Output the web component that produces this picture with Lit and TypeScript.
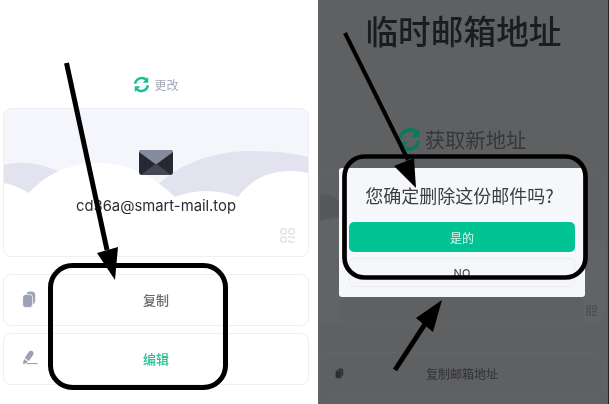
import { LitElement, html, css, svg } from "lit";
import { customElement } from "lit/decorators.js";

const refreshIcon = svg`<path d="M3 11 A9.5 9.5 0 0 1 19 5.5" fill="none" stroke="#0fc492" stroke-width="3.4"/><path d="M21.5 1.5 V9.5 H13.5 Z" fill="#0fc492"/><path d="M21 13 A9.5 9.5 0 0 1 5 18.5" fill="none" stroke="#0fc492" stroke-width="3.4"/><path d="M2.5 22.5 V14.5 H10.5 Z" fill="#0fc492"/>`;
const copyIcon = svg`<rect x="4.4" y="0.6" width="8.8" height="12.6" rx="3.6" fill="currentColor"/><rect x="0.6" y="3.4" width="10" height="13.2" rx="3.2" fill="currentColor" stroke="var(--gap, #fff)" stroke-width="0.8"/>`;
const penIcon = svg`<path d="M7 1.6 C8 .4 9.4 .4 10.6 1.3 C11.8 2.2 12 3.6 11.2 4.8 L7 11 L2.7 8 Z" fill="currentColor"/><path d="M2 9 L6 11.8 L3.8 13.6 L.8 13.9 Z" fill="currentColor"/><rect x="5" y="13" width="10.6" height="1.1" fill="currentColor"/>`;
const qrIcon = svg`<g fill="none" stroke="currentColor" stroke-width="1.5"><rect x="1" y="1" width="5" height="5" rx="1.2"/><rect x="9" y="1" width="5" height="5" rx="1.2"/><rect x="1" y="9" width="5" height="5" rx="1.2"/><path d="M9 10 V9 H14 V11 M14 14 H9 V12"/></g>`;

@customElement("mail-card")
class MailCard extends LitElement {
  static styles = css`
    :host { display: block; height: 149px; box-sizing: border-box; position: relative; overflow: hidden;
      background: #f5f6fb; border: 1px solid #eeeff6; border-radius: 8px; }
    .clouds { position: absolute; inset: 0; width: 100%; height: 100%; }
    .body { position: relative; height: 100%; display: flex; flex-direction: column; align-items: center; padding-top: 41px; box-sizing: border-box; }
    .env { width: 34px; height: 25px; display: block; }
    .addr { margin-top: 21px; font: 14.8px/20px "Inter", "Liberation Sans", sans-serif; color: #2a2c34; }
    .qr { position: absolute; right: 13px; bottom: 13px; width: 15px; height: 15px; color: #e2e3ea; }
  `;
  render() {
    return html`
      <svg class="clouds" viewBox="0 0 304 147" preserveAspectRatio="none">
        <path d="M0 56 C15 52 35 52 62 66 L25 90 L0 80 Z" fill="#e2e3ee"/>
        <path d="M150 80 C175 52 215 42 246 42 C270 42 290 44 304 48 V70 L234 92 L171 92 Z" fill="#e2e3ee"/>
        <path d="M0 74 C10 76 18 80 25 84 C45 62 70 54 96 54 C125 54 150 68 171 88 C190 80 215 80 234 88 C250 66 275 58 304 64 V147 H0 Z" fill="#fff"/>
      </svg>
      <div class="body">
        <svg class="env" viewBox="0 0 34 26" preserveAspectRatio="none">
          <rect width="34" height="26" rx="3" fill="#262933"/>
          <path d="M0 2 Q0 0 3 0 H31 Q34 0 34 2 L17 15 Z" fill="#878b9e"/>
          <path d="M2 26 L17 14 L32 26 Z" fill="#454753"/>
        </svg>
        <div class="addr">cd36a@smart-mail.top</div>
      </div>
      <svg class="qr" viewBox="0 0 15 15">${qrIcon}</svg>`;
  }
}

@customElement("app-root")
export class AppRoot extends LitElement {
  static styles = css`
    :host { display: block; position: relative; width: 609px; height: 404px; overflow: hidden; background: #fff;
      font-family: "Noto Sans CJK SC", "Liberation Sans", sans-serif; }
    .screens { display: grid; grid-template-columns: 318px 290px 1px; height: 404px; background: #fff; filter: blur(.35px); }
    .left { padding: 73px 9px 0 3px; box-sizing: border-box; display: flex; flex-direction: column; }
    .change { height: 22px; display: flex; justify-content: center; align-items: center; gap: 4px; margin-bottom: 13px; font-size: 12px; color: #a4a7b5; }
    .change svg { width: 17px; height: 17px; }
    .rows { margin-top: 17px; display: flex; flex-direction: column; gap: 7px; }
    .row { height: 52px; box-sizing: border-box; border: 1px solid #eeeff6; border-radius: 8px; background: #fff; position: relative; padding-bottom: 2px;
      display: flex; align-items: center; justify-content: center; font-size: 13px; font-weight: 500; color: #6a6b70; }
    .row .ic { position: absolute; left: 18px; top: 16px; width: 16px; height: 17px; color: #9da1b6; }
    .row.edit { color: #27c195; }
    .right { position: relative; background: #5f6062; overflow: hidden; padding: 0 3px 0 0; box-sizing: border-box; display: flex; flex-direction: column; border-left: 1px solid #666; }
    .title { margin: 10px 0 0; text-align: center; font-size: 32.7px; line-height: 40px; font-weight: 500; color: #1b1c20; padding-left: 3px; white-space: nowrap; }
    .get { margin-top: 76px; height: 28px; padding: 0 1px 2px 0; box-sizing: border-box; display: flex; justify-content: center; align-items: center; gap: 3px; font-size: 20.3px; color: #36373b; }
    .get svg { width: 25px; height: 25px; filter: brightness(.62); }
    .bgcard { margin-top: 16px; height: 154px; box-sizing: border-box; border: 1px solid #636466; border-radius: 10px; position: relative; overflow: hidden; background: #5f6062; }
    .bands { position: absolute; inset: 0; width: 100%; height: 100%; }
    .bgcard .qr { position: absolute; right: 7px; bottom: 7px; width: 11px; height: 11px; color: #4a4b4e; }
    .bgrow { --gap: #5f6062; margin-top: 28px; height: 45px; box-sizing: border-box; padding-bottom: 3px; border: 1px solid #636466; border-radius: 10px; position: relative; display: flex; align-items: center; justify-content: center; font-size: 12px; font-weight: 500; color: #38393d; }
    .bgrow svg { position: absolute; left: 15px; top: 14px; width: 10px; height: 13px; color: #2e2f33; }
    .modal { position: absolute; left: 20px; top: 168px; width: 246px; height: 129px; box-sizing: border-box; background: #f6f7fb; border-radius: 3px; padding: 15px 10px 0; display: flex; flex-direction: column; align-items: stretch; }
    .q { font-size: 18px; line-height: 24px; height: 24px; padding-right: 5px; color: #3c3d43; text-align: center; white-space: nowrap; }
    .yes { margin-top: 15px; height: 30px; border-radius: 5px; background: #02c394; color: #dff7ef; font-size: 12px; display: flex; align-items: center; justify-content: center; }
    .no { margin-top: 6px; height: 29px; box-sizing: border-box; border: 1px solid #ebecf3; border-radius: 5px; color: #55575f; font-size: 11px; font-weight: 500; display: flex; align-items: center; justify-content: center; font-family: "Inter", "Liberation Sans", sans-serif; }
    .marks { position: absolute; inset: 0; width: 609px; height: 404px; pointer-events: none; }
    .edge { background: #222; }
  `;
  render() {
    return html`
      <div class="screens">
        <section class="left">
          <div class="change"><svg viewBox="0 0 24 24">${refreshIcon}</svg><span>更改</span></div>
          <mail-card></mail-card>
          <div class="rows">
            <div class="row"><svg class="ic" viewBox="0 0 16 17">${copyIcon}</svg>复制</div>
            <div class="row edit"><svg class="ic" viewBox="0 0 16 17">${penIcon}</svg>编辑</div>
          </div>
        </section>
        <section class="right">
          <h1 class="title">临时邮箱地址</h1>
          <div class="get"><svg viewBox="0 0 24 24">${refreshIcon}</svg><span>获取新地址</span></div>
          <div class="bgcard">
            <svg class="bands" viewBox="0 0 284 152" preserveAspectRatio="none">
              <path d="M0 24 C8 22 14 26 20 30 V46 L0 50 Z" fill="#57585b"/>
              <path d="M0 50 L20 46 V152 H0 Z" fill="#626365"/>
              <path d="M264 70 H284 V152 H264 Z" fill="#626365"/>
            </svg>
            <svg class="qr" viewBox="0 0 15 15">${qrIcon}</svg>
          </div>
          <div class="bgrow"><svg viewBox="0 0 16 17">${copyIcon}</svg>复制邮箱地址</div>
          <div class="modal">
            <div class="q">您确定删除这份邮件吗?</div>
            <div class="yes">是的</div>
            <div class="no">NO</div>
          </div>
        </section>
        <div class="edge"></div>
      </div>
      <svg class="marks" viewBox="0 0 609 404">
        <rect x="50.5" y="265.5" width="175" height="122" rx="22" fill="none" stroke="#000" stroke-width="5"/>
        <rect x="344.5" y="156.5" width="241" height="121" rx="20" fill="none" stroke="#000" stroke-width="4.7"/>
        <path d="M66.5 63 L107 250" stroke="#000" stroke-width="5"/>
        <path d="M97 253 L118 247 L115 280 Z" fill="#000"/>
        <path d="M345 33 L408 160" stroke="#000" stroke-width="4"/>
        <path d="M394 166 L414 158 L416 188 Z" fill="#000"/>
        <path d="M395 370 L425 324" stroke="#000" stroke-width="5"/>
        <path d="M416 318 L433 332 L442 300 Z" fill="#000"/>
      </svg>`;
  }
}
